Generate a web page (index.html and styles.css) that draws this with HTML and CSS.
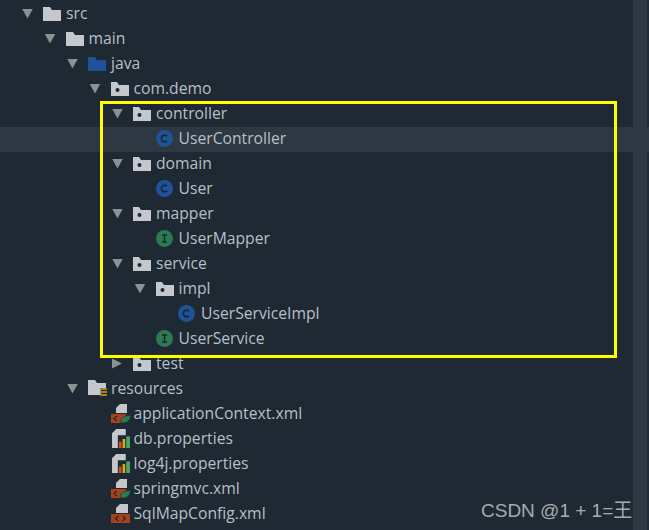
FILE: index.html
```html
<!DOCTYPE html>
<html lang="en">

<head>
    <meta charset="UTF-8">
    <title>Project tree</title>
    <link rel="stylesheet" href="styles.css">
</head>

<body>
    <svg class="defs" width="0" height="0">
        <symbol id="folder" viewBox="0 0 18 14">
            <path d="M0 0h7l2 3h9v11H0z" fill="#c4c7cb" />
        </symbol>
        <symbol id="java-folder" viewBox="0 0 18 14">
            <path d="M0 0h7l2 3h9v11H0z" fill="#1f5297" />
        </symbol>
        <symbol id="package" viewBox="0 0 18 14">
            <path d="M0 0h6l2 3h10v11H0z" fill="#c4c7cb" />
            <circle cx="6.5" cy="8" r="2" fill="#1f2933" />
        </symbol>
        <symbol id="res-folder" viewBox="0 0 20 18">
            <path d="M0 0h7l2 3h9v5h-5v7H0z" fill="#c4c7cb" />
            <path d="M12 8h7v2h-7zM12 11h7v2h-7zM12 14h7v2h-7z" fill="#a8851c" />
        </symbol>
        <symbol id="class" viewBox="0 0 17 17">
            <circle cx="8.5" cy="8.5" r="8.5" fill="#1f5297" />
            <path d="M11 6.2A3.3 3.3 0 1 0 11 10.8" fill="none" stroke="#1b2430" stroke-width="1.5" />
        </symbol>
        <symbol id="interface" viewBox="0 0 17 17">
            <circle cx="8.5" cy="8.5" r="8.5" fill="#2b7a52" />
            <path d="M6 5h5M6 12h5M8.5 5v7" fill="none" stroke="#1b2430" stroke-width="1.5" />
        </symbol>
        <symbol id="spring-xml" viewBox="0 0 20 19">
            <path d="M9 0h7v9H5V4z" fill="#c4c7cb" />
            <path d="M0 10h15v9H0z" fill="#a8401c" />
            <path d="M6 12l-3 2.500 3 2.500" fill="none" stroke="#1f2933" stroke-width="1.200" />
            <path d="M9.500 18.500c-1-4 3-7 10-7 0 5-4 8.500-10 7z" fill="#2b7a52" stroke="#1f2933" stroke-width=".6" />
        </symbol>
        <symbol id="xml" viewBox="0 0 20 19">
            <path d="M9 0h8v9H5V4z" fill="#c4c7cb" />
            <path d="M0 10h19v9H0z" fill="#a8401c" />
            <path d="M7.500 12l-3 2.500 3 2.500M11.500 12l3 2.500-3 2.500" fill="none" stroke="#1f2933" stroke-width="1.200" />
        </symbol>
        <symbol id="props" viewBox="0 0 17 18">
            <path d="M4 0h9v6H5.500v12H0V4z" fill="#c4c7cb" />
            <path d="M6.500 12H9v6H6.500z" fill="#d9501e" />
            <path d="M10 9.500h2.500V18H10z" fill="#d8a81e" />
            <path d="M13.500 7H17v11h-3.500z" fill="#4aa860" />
        </symbol>
    </svg>

    <main class="tree">
        <div class="row lv0"><span class="arrow open"></span><svg class="icon"><use href="#folder" /></svg><span class="label">src</span></div>
        <div class="row lv1"><span class="arrow open"></span><svg class="icon"><use href="#folder" /></svg><span class="label">main</span></div>
        <div class="row lv2"><span class="arrow open"></span><svg class="icon"><use href="#java-folder" /></svg><span class="label">java</span></div>
        <div class="row lv3"><span class="arrow open"></span><svg class="icon"><use href="#package" /></svg><span class="label">com.demo</span></div>
        <div class="row lv4"><span class="arrow open"></span><svg class="icon"><use href="#package" /></svg><span class="label">controller</span></div>
        <div class="row lv5 selected"><span class="arrow"></span><svg class="icon round"><use href="#class" /></svg><span class="label">UserController</span></div>
        <div class="row lv4"><span class="arrow open"></span><svg class="icon"><use href="#package" /></svg><span class="label">domain</span></div>
        <div class="row lv5"><span class="arrow"></span><svg class="icon round"><use href="#class" /></svg><span class="label">User</span></div>
        <div class="row lv4"><span class="arrow open"></span><svg class="icon"><use href="#package" /></svg><span class="label">mapper</span></div>
        <div class="row lv5"><span class="arrow"></span><svg class="icon round"><use href="#interface" /></svg><span class="label">UserMapper</span></div>
        <div class="row lv4"><span class="arrow open"></span><svg class="icon"><use href="#package" /></svg><span class="label">service</span></div>
        <div class="row lv5"><span class="arrow open"></span><svg class="icon"><use href="#package" /></svg><span class="label">impl</span></div>
        <div class="row lv6"><span class="arrow"></span><svg class="icon round"><use href="#class" /></svg><span class="label">UserServiceImpl</span></div>
        <div class="row lv5"><span class="arrow"></span><svg class="icon round"><use href="#interface" /></svg><span class="label">UserService</span></div>
        <div class="row lv4"><span class="arrow shut"></span><svg class="icon"><use href="#package" /></svg><span class="label">test</span></div>
        <div class="row lv2"><span class="arrow open"></span><svg class="icon res"><use href="#res-folder" /></svg><span class="label">resources</span></div>
        <div class="row lv3"><span class="arrow"></span><svg class="icon file"><use href="#spring-xml" /></svg><span class="label">applicationContext.xml</span></div>
        <div class="row lv3"><span class="arrow"></span><svg class="icon file"><use href="#props" /></svg><span class="label">db.properties</span></div>
        <div class="row lv3"><span class="arrow"></span><svg class="icon file"><use href="#props" /></svg><span class="label">log4j.properties</span></div>
        <div class="row lv3"><span class="arrow"></span><svg class="icon file"><use href="#spring-xml" /></svg><span class="label">springmvc.xml</span></div>
        <div class="row lv3"><span class="arrow"></span><svg class="icon file"><use href="#xml" /></svg><span class="label">SqlMapConfig.xml</span></div>
    </main>

    <div class="scrollbar"></div>
    <div class="marker"></div>
    <div class="watermark">CSDN @1 + 1=王</div>
</body>

</html>
```

FILE: styles.css
```css
* {
    box-sizing: border-box;
    margin: 0;
    padding: 0;
}

html,
body {
    height: 100%;
    overflow: hidden;
}

body {
    position: relative;
    background-color: #1f2933;
    color: #b8bfc6;
    font-family: 'Open Sans', sans-serif;
    font-size: 15.7px;
}

.defs {
    position: absolute;
}

.tree {
    padding-top: 2px;
}

.row {
    display: flex;
    align-items: center;
    height: 25px;
    padding-bottom: 2px;
    white-space: nowrap;
}

.label {
    padding-bottom: 2px;
}

.selected {
    background-color: #2e3842;
}

.lv0 { padding-left: 22px; }
.lv1 { padding-left: 44.5px; }
.lv2 { padding-left: 67px; }
.lv3 { padding-left: 89.5px; }
.lv4 { padding-left: 112px; }
.lv5 { padding-left: 134.5px; }
.lv6 { padding-left: 157px; }

.arrow {
    flex: none;
    width: 21px;
    height: 10px;
}

.open {
    background-color: #8e9092;
    clip-path: polygon(0 0, 11px 0, 5.5px 10px);
}

.shut {
    background-color: #8e9092;
    clip-path: polygon(0 0, 10px 5px, 0 10px);
}

.icon {
    flex: none;
    width: 18px;
    height: 14px;
    margin-right: 5px;
}

.round {
    width: 17px;
    height: 17px;
    margin-right: 6px;
}

.res {
    width: 20px;
    height: 18px;
    margin-right: 3px;
}

.file {
    width: 20px;
    height: 19px;
    margin-right: 3px;
}

.scrollbar {
    position: absolute;
    top: 0;
    bottom: 0;
    left: 633px;
    width: 14px;
    background-color: #2e3842;
}

.marker {
    position: absolute;
    left: 100px;
    top: 101px;
    width: 517px;
    height: 257px;
    border: 3px solid #ffff00;
}

.watermark {
    position: absolute;
    left: 481px;
    top: 500px;
    color: #a8abae;
    font-family: 'Liberation Sans', 'Noto Sans CJK SC', sans-serif;
    font-size: 19px;
    line-height: 22px;
    white-space: nowrap;
}
```
